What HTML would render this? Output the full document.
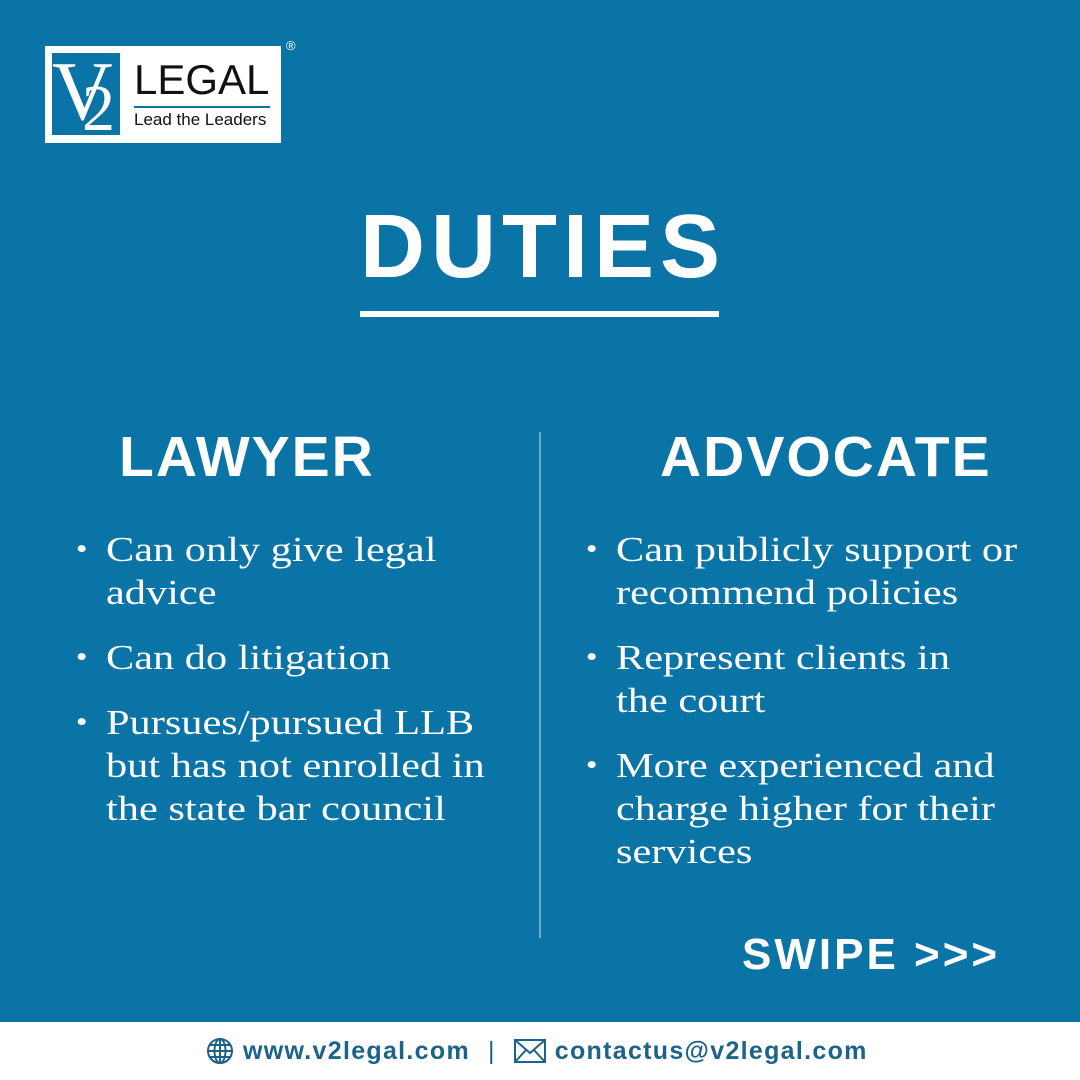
<!DOCTYPE html>
<html><head><meta charset="utf-8"><style>
*{margin:0;padding:0;box-sizing:border-box}
body{width:1080px;height:1080px;background:#0b74a6;position:relative;overflow:hidden;font-family:"Liberation Sans",sans-serif;color:#fff}
.abs{position:absolute}
.logo{left:45px;top:46px;width:236px;height:97px;background:#fff}
.sq{left:7px;top:7px;width:68px;height:82px;background:#0b74a6;overflow:hidden}
.h{font-weight:bold;white-space:nowrap}
ul{list-style:none;font-family:"Liberation Serif",serif;font-size:35px;line-height:43px;transform:scaleX(1.21);transform-origin:0 0}
li{position:relative;padding-left:0;margin-bottom:22px;white-space:nowrap}
li:before{content:"•";position:absolute;left:-25px;font-size:28px}
</style></head><body>
<div class="abs logo">
 <div class="abs sq"><span class="abs" style="left:0px;top:-10px;font-family:'Liberation Serif',serif;font-size:84px;color:#fff">V</span><span class="abs" style="left:30px;top:18px;font-family:'Liberation Serif',serif;font-size:66px;color:#fff">2</span></div>
 <div class="abs" style="left:89px;top:10px;font-size:42px;color:#111">LEGAL</div>
 <div class="abs" style="left:89px;top:60px;width:136px;height:2px;background:#0b74a6"></div>
 <div class="abs" style="left:89px;top:64px;font-size:17px;color:#111">Lead the Leaders</div>
</div>
<div class="abs" style="left:286px;top:38px;font-size:13px">®</div>
<div class="abs h" style="left:360px;top:196px;font-size:90px;letter-spacing:6px">DUTIES</div>
<div class="abs" style="left:360px;top:311px;width:359px;height:6px;background:#fff"></div>
<div class="abs h" style="left:119px;top:424px;font-size:57px;letter-spacing:2px">LAWYER</div>
<div class="abs h" style="left:660px;top:424px;font-size:57px;letter-spacing:2px">ADVOCATE</div>
<div class="abs" style="left:539px;top:432px;width:2px;height:506px;background:#6fa9c8"></div>
<ul class="abs" style="left:106px;top:528px;width:380px">
<li>Can only give legal<br>advice</li>
<li>Can do litigation</li>
<li>Pursues/pursued LLB<br>but has not enrolled in<br>the state bar council</li>
</ul>
<ul class="abs" style="left:616px;top:528px;width:400px">
<li>Can publicly support or<br>recommend policies</li>
<li>Represent clients in<br>the court</li>
<li>More experienced and<br>charge higher for their<br>services</li>
</ul>
<div class="abs h" style="left:742px;top:930px;font-size:44px;letter-spacing:3px">SWIPE &gt;&gt;&gt;</div>
<div class="abs" style="left:0;top:1022px;width:1080px;height:58px;background:#fff"></div>
<div class="abs" style="left:205px;top:1036px;font-size:25px;color:#1b6388;font-weight:bold;white-space:nowrap;display:flex;align-items:center;letter-spacing:1.3px">
<svg width="30" height="30" viewBox="0 0 30 30" fill="none" stroke="#1b6388" stroke-width="2"><circle cx="15" cy="15" r="12"/><ellipse cx="15" cy="15" rx="5.5" ry="12"/><line x1="3" y1="15" x2="27" y2="15"/><line x1="5" y1="9" x2="25" y2="9"/><line x1="5" y1="21" x2="25" y2="21"/><line x1="15" y1="3" x2="15" y2="27"/></svg>
<span style="margin-left:8px">www.v2legal.com</span><span style="margin:0 18px 0 18px;font-weight:normal">|</span>
<svg width="32" height="24" viewBox="0 0 32 24" fill="none" stroke="#1b6388" stroke-width="2"><rect x="1" y="1" width="30" height="22"/><path d="M1 1 L16 14 L31 1 M1 23 L12 11 M31 23 L20 11"/></svg>
<span style="margin-left:9px">contactus@v2legal.com</span></div>
</body></html>
